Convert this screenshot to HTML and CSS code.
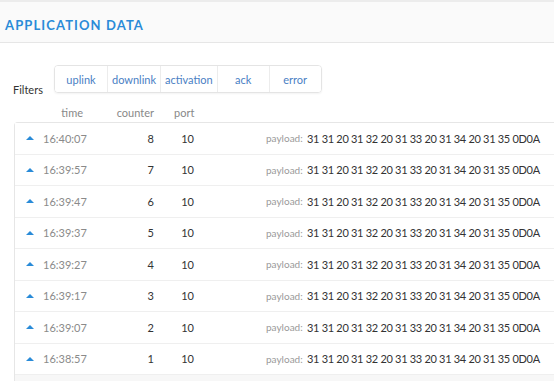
FILE: index.html
```html
<!DOCTYPE html>
<html lang="en">
<head>
  <meta charset="UTF-8" />
  <meta name="viewport" content="width=device-width, initial-scale=1.0"/>
  <title>Application Data</title>
  <link rel="stylesheet" href="styles.css">
</head>
<body>

  <div class="page-header">
    <h1>Application Data</h1>
  </div>

  <div class="filters">
    <span class="filters-label">Filters</span>
    <div class="filter-group">
      <button>uplink</button>
      <button>downlink</button>
      <button>activation</button>
      <button>ack</button>
      <button>error</button>
    </div>
  </div>

  <div class="data">
    <div class="row head">
      <span></span>
      <span class="time">time</span>
      <span class="counter">counter</span>
      <span class="port">port</span>
    </div>
    <div class="rows" id="rows"></div>
  </div>

  <script>
    const times = ["16:40:07", "16:39:57", "16:39:47", "16:39:37", "16:39:27", "16:39:17", "16:39:07", "16:38:57"];
    const payload = "31 31 20 31 32 20 31 33 20 31 34 20 31 35 0D0A";

    let html = "";
    times.forEach((t, i) => {
      html += `<div class="row">
        <span class="arrow"></span>
        <span class="time">${t}</span>
        <span class="counter">${8 - i}</span>
        <span class="port">10</span>
        <span></span>
        <span class="label">payload:</span>
        <span class="hex">${payload}</span>
      </div>`;
    });
    document.getElementById("rows").innerHTML = html;
  </script>

</body>
</html>
```

FILE: styles.css
```css
body {
  font-family: Lato, "Open Sans", sans-serif;
  margin: 0;
  background: #fff;
  color: #333;
  overflow: hidden;
}
.page-header {
  box-sizing: border-box;
  height: 43px;
  background: #fafafa;
  border-top: 2px solid #ececec;
  border-bottom: 1px solid #e6e6e6;
  display: flex;
  align-items: center;
  padding: 5px 0 0 5px;
}
h1 {
  margin: 0;
  font-size: 13px;
  font-weight: 700;
  letter-spacing: 1.1px;
  text-transform: uppercase;
  color: #2a8bd8;
}
.filters {
  display: flex;
  align-items: flex-end;
  margin-top: 22px;
  padding-left: 13px;
}
.filters-label {
  font-size: 11px;
  color: #333;
  width: 41px;
  line-height: 14px;
  margin-bottom: -4px;
}
.filter-group {
  display: flex;
  border: 1px solid #e4e4e4;
  border-radius: 4px;
  box-shadow: 0 1px 2px rgba(0, 0, 0, 0.05);
  overflow: hidden;
}
.filter-group button {
  font-family: inherit;
  font-size: 11px;
  color: #4a80c4;
  background: #fff;
  border: none;
  border-left: 1px solid #ececec;
  height: 26px;
  min-width: 52px;
  padding: 0 4px;
  cursor: pointer;
}
.filter-group button:first-child {
  border-left: none;
}
.data {
  margin-left: 14px;
  margin-top: 9px;
}
.row {
  display: grid;
  grid-template-columns: 28px 40px 71px 40px 72px 41px 1fr;
  align-items: center;
  height: 30.5px;
  background: #fff;
  border-bottom: 1px solid #efefef;
  white-space: nowrap;
  font-size: 11px;
}
.row.head {
  height: 20px;
  padding-left: 1px;
  border: none;
  color: #888;
}
.rows {
  border: 1px solid #e6e6e6;
  border-right: none;
  border-radius: 4px 0 0 0;
  background: #f7f7f7;
  padding-bottom: 10px;
}
.arrow {
  justify-self: start;
  margin-left: 11px;
  width: 0;
  height: 0;
  border-left: 4px solid transparent;
  border-right: 4px solid transparent;
  border-bottom: 4px solid #2a8bd8;
}
.time, .counter, .port {
  text-align: right;
}
.row .time {
  color: #8a8a8a;
}
.row.head .time, .row.head .counter, .row.head .port {
  color: #888;
}
.row.head .port {
  text-align: left;
  padding-left: 20px;
}
.label {
  font-size: 10px;
  color: #9a9a9a;
}
.hex {
  color: #333;
  letter-spacing: -0.3px;
}
```
